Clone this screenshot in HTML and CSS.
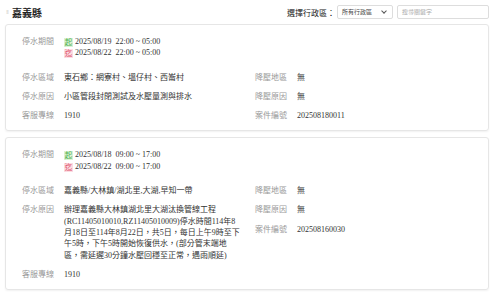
FILE: index.html
```html
<!DOCTYPE html>
<html lang="zh-Hant">
<head>
    <meta charset="UTF-8">
    <meta name="viewport" content="width=device-width, initial-scale=1.0">
    <title>停水公告 - 嘉義縣</title>
    <link rel="stylesheet" href="styles.css">
</head>
<body>
    <div id="page">
        <div class="header">
            <h1 class="title"><span class="grip">⁞⁞</span>嘉義縣</h1>
            <div class="filter">
                <label class="filter-label">選擇行政區：</label>
                <div class="select">所有行政區<span class="chev"></span></div>
                <div class="search">搜尋關鍵字</div>
            </div>
        </div>

        <div class="card">
            <div class="row period">
                <span class="label">停水期間</span>
                <div class="dates">
                    <div><span class="badge start">起</span>2025/08/19&nbsp; 22:00 ~ 05:00</div>
                    <div><span class="badge end">迄</span>2025/08/22&nbsp; 22:00 ~ 05:00</div>
                </div>
            </div>
            <div class="cols">
                <div class="col left">
                    <div class="row"><span class="label">停水區域</span><span class="value">東石鄉：網寮村、塭仔村、西崙村</span></div>
                    <div class="row"><span class="label">停水原因</span><span class="value">小區管段封閉測試及水壓量測與排水</span></div>
                    <div class="row"><span class="label">客服專線</span><span class="value">1910</span></div>
                </div>
                <div class="col right">
                    <div class="row"><span class="label">降壓地區</span><span class="value">無</span></div>
                    <div class="row"><span class="label">降壓原因</span><span class="value">無</span></div>
                    <div class="row"><span class="label">案件編號</span><span class="value">202508180011</span></div>
                </div>
            </div>
        </div>

        <div class="card">
            <div class="row period">
                <span class="label">停水期間</span>
                <div class="dates">
                    <div><span class="badge start">起</span>2025/08/18&nbsp; 09:00 ~ 17:00</div>
                    <div><span class="badge end">迄</span>2025/08/22&nbsp; 09:00 ~ 17:00</div>
                </div>
            </div>
            <div class="cols">
                <div class="col left">
                    <div class="row"><span class="label">停水區域</span><span class="value">嘉義縣/大林鎮/湖北里,大湖,早知一帶</span></div>
                    <div class="row"><span class="label">停水原因</span><span class="value">辦理嘉義縣大林鎮湖北里大湖汰換管線工程(RC11405010010,RZ11405010009)停水時間114年8月18日至114年8月22日，共5日，每日上午9時至下午5時，下午5時開始恢復供水，(部分管末端地區，需延遲30分鐘水壓回穩至正常，遇雨順延)</span></div>
                    <div class="row"><span class="label">客服專線</span><span class="value">1910</span></div>
                </div>
                <div class="col right">
                    <div class="row"><span class="label">降壓地區</span><span class="value">無</span></div>
                    <div class="row"><span class="label">降壓原因</span><span class="value">無</span></div>
                    <div class="row"><span class="label">案件編號</span><span class="value">202508160030</span></div>
                </div>
            </div>
        </div>
    </div>
</body>
</html>
```

FILE: styles.css
```css
body {
    margin: 0;
    background: #fff;
    font-family: "Liberation Serif", "Noto Sans CJK TC", serif;
    font-size: 8px;
    color: #333;
}

#page {
    padding: 0 11px 0 5px;
}

.header {
    display: flex;
    align-items: center;
    justify-content: space-between;
    height: 24px;
}

.title {
    margin: 0;
    font-size: 10px;
    font-weight: bold;
    color: #222;
    display: flex;
    align-items: center;
}

.grip {
    color: #ccc;
    font-size: 7px;
    font-weight: normal;
    letter-spacing: -1px;
    margin: 0 4px 0 1px;
}

.filter {
    display: flex;
    align-items: center;
}

.filter-label {
    font-size: 8px;
    color: #222;
    margin-right: 2px;
}

.select,
.search {
    height: 12px;
    border: 1px solid #ddd;
    border-radius: 2px;
    font-size: 6px;
    line-height: 12px;
    padding: 0 4px;
    box-sizing: content-box;
}

.select {
    width: 46px;
    color: #444;
    display: flex;
    align-items: center;
    justify-content: space-between;
    margin-right: 4px;
}

.chev {
    width: 3px;
    height: 3px;
    border-right: 1px solid #555;
    border-bottom: 1px solid #555;
    transform: rotate(45deg);
    margin: -2px 2px 0 0;
}

.search {
    width: 82px;
    color: #aaa;
}

.card {
    border: 1px solid #e6e6e6;
    border-radius: 3px;
    box-shadow: 0 1px 2px rgba(0, 0, 0, 0.06);
    padding: 11px 16px 9px;
    margin-bottom: 6px;
}

.row {
    display: flex;
    line-height: 11.3px;
    margin-bottom: 8px;
}

.col .row:last-child {
    margin-bottom: 0;
}

.row.period {
    margin-bottom: 13px;
}

.label {
    flex: none;
    width: 42px;
    color: #999;
}

.value {
    color: #333;
}

.left .value {
    width: 176px;
}

.cols {
    display: flex;
}

.col.left {
    width: 233px;
}

.badge {
    display: inline-block;
    width: 9px;
    height: 9px;
    line-height: 9px;
    font-size: 7.5px;
    text-align: center;
    margin-right: 2px;
    vertical-align: -1px;
}

.badge.start {
    color: #4caf50;
    background: #dcf2d6;
}

.badge.end {
    color: #e0526b;
    background: #fbdde2;
}
```
